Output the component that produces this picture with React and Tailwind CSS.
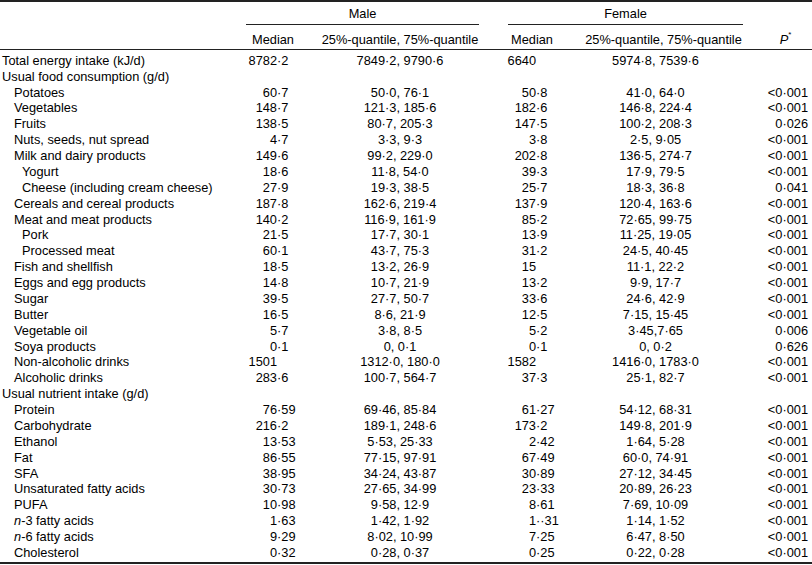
import React from "react";

const rows = [
  ["Total energy intake (kJ/d)", 0, "8782·2", "7849·2, 9790·6", "6640", "5974·8, 7539·6", ""],
  ["Usual food consumption (g/d)", 0],
  ["Potatoes", 1, "60·7", "50·0, 76·1", "50·8", "41·0, 64·0", "<0·001"],
  ["Vegetables", 1, "148·7", "121·3, 185·6", "182·6", "146·8, 224·4", "<0·001"],
  ["Fruits", 1, "138·5", "80·7, 205·3", "147·5", "100·2, 208·3", "0·026"],
  ["Nuts, seeds, nut spread", 1, "4·7", "3·3, 9·3", "3·8", "2·5, 9·05", "<0·001"],
  ["Milk and dairy products", 1, "149·6", "99·2, 229·0", "202·8", "136·5, 274·7", "<0·001"],
  ["Yogurt", 2, "18·6", "11·8, 54·0", "39·3", "17·9, 79·5", "<0·001"],
  ["Cheese (including cream cheese)", 2, "27·9", "19·3, 38·5", "25·7", "18·3, 36·8", "0·041"],
  ["Cereals and cereal products", 1, "187·8", "162·6, 219·4", "137·9", "120·4, 163·6", "<0·001"],
  ["Meat and meat products", 1, "140·2", "116·9, 161·9", "85·2", "72·65, 99·75", "<0·001"],
  ["Pork", 2, "21·5", "17·7, 30·1", "13·9", "11·25, 19·05", "<0·001"],
  ["Processed meat", 2, "60·1", "43·7, 75·3", "31·2", "24·5, 40·45", "<0·001"],
  ["Fish and shellfish", 1, "18·5", "13·2, 26·9", "15", "11·1, 22·2", "<0·001"],
  ["Eggs and egg products", 1, "14·8", "10·7, 21·9", "13·2", "9·9, 17·7", "<0·001"],
  ["Sugar", 1, "39·5", "27·7, 50·7", "33·6", "24·6, 42·9", "<0·001"],
  ["Butter", 1, "16·5", "8·6, 21·9", "12·5", "7·15, 15·45", "<0·001"],
  ["Vegetable oil", 1, "5·7", "3·8, 8·5", "5·2", "3·45,7·65", "0·006"],
  ["Soya products", 1, "0·1", "0, 0·1", "0·1", "0, 0·2", "0·626"],
  ["Non-alcoholic drinks", 1, "1501", "1312·0, 180·0", "1582", "1416·0, 1783·0", "<0·001"],
  ["Alcoholic drinks", 1, "283·6", "100·7, 564·7", "37·3", "25·1, 82·7", "<0·001"],
  ["Usual nutrient intake (g/d)", 0],
  ["Protein", 1, "76·59", "69·46, 85·84", "61·27", "54·12, 68·31", "<0·001"],
  ["Carbohydrate", 1, "216·2", "189·1, 248·6", "173·2", "149·8, 201·9", "<0·001"],
  ["Ethanol", 1, "13·53", "5·53, 25·33", "2·42", "1·64, 5·28", "<0·001"],
  ["Fat", 1, "86·55", "77·15, 97·91", "67·49", "60·0, 74·91", "<0·001"],
  ["SFA", 1, "38·95", "34·24, 43·87", "30·89", "27·12, 34·45", "<0·001"],
  ["Unsaturated fatty acids", 1, "30·73", "27·65, 34·99", "23·33", "20·89, 26·23", "<0·001"],
  ["PUFA", 1, "10·98", "9·58, 12·9", "8·61", "7·69, 10·09", "<0·001"],
  ["n-3 fatty acids", 1, "1·63", "1·42, 1·92", "1··31", "1·14, 1·52", "<0·001"],
  ["n-6 fatty acids", 1, "9·29", "8·02, 10·99", "7·25", "6·47, 8·50", "<0·001"],
  ["Cholesterol", 1, "0·32", "0·28, 0·37", "0·25", "0·22, 0·28", "<0·001"],
];

// splits a value at the first middle dot so the column lines up on the decimal
const Decimal = ({ value, intWidth }) => {
  if (!value) return null;
  const i = value.indexOf("·");
  const whole = i === -1 ? value : value.slice(0, i);
  const frac = i === -1 ? "" : value.slice(i);
  return (
    <>
      <span className={`inline-block text-right ${intWidth}`}>{whole}</span>
      <span className="inline-block text-left">{frac}</span>
    </>
  );
};

const Label = ({ text }) => {
  if (text.startsWith("n-")) {
    return (
      <>
        <i>n</i>
        {text.slice(1)}
      </>
    );
  }
  return text;
};

const indent = ["pl-[2px]", "pl-[14px]", "pl-[22px]"];

export default function App() {
  return (
    <div
      className="w-[812px] bg-white text-black text-[12.8px] leading-[15.87px]"
      style={{ fontFamily: '"Liberation Sans", Arial, sans-serif' }}
    >
      <div className="border-t-2 border-b-2 border-[#222]">
        <table className="w-full table-fixed border-collapse">
          <colgroup>
            <col className="w-[246px]" />
            <col className="w-[54px]" />
            <col className="w-[200px]" />
            <col className="w-[64px]" />
            <col className="w-[199px]" />
            <col className="w-[49px]" />
          </colgroup>
          <thead>
            <tr>
              <th className="p-0" />
              <th colSpan={2} className="p-0 font-normal">
                <div className="mr-[21px] pt-[4px] pb-[2px] border-b border-[#222] text-center">
                  Male
                </div>
              </th>
              <th colSpan={2} className="p-0 font-normal">
                <div className="ml-[8px] mr-[20px] pt-[4px] pb-[2px] border-b border-[#222] text-center">
                  Female
                </div>
              </th>
              <th className="p-0" />
            </tr>
            <tr className="border-b border-[#222]">
              <th className="p-0 pt-[7px] pb-[1px]" />
              <th className="p-0 pt-[7px] pb-[1px] font-normal text-center">Median</th>
              <th className="p-0 pt-[7px] pb-[1px] font-normal text-center whitespace-nowrap">
                25%-quantile, 75%-quantile
              </th>
              <th className="p-0 pt-[7px] pb-[1px] font-normal text-center">Median</th>
              <th className="p-0 pt-[7px] pb-[1px] font-normal text-center whitespace-nowrap">
                25%-quantile, 75%-quantile
              </th>
              <th className="p-0 pt-[7px] pb-[1px] pr-[4px] font-normal text-center">
                <i>P</i>
                <sup className="text-[8px] align-[3px]">*</sup>
              </th>
            </tr>
          </thead>
          <tbody>
            {rows.map((r, idx) => {
              const pad =
                idx === 0 ? "pt-[3px]" : idx === rows.length - 1 ? "pb-[1px]" : "";
              return (
                <tr key={idx}>
                  <td className={`p-0 whitespace-nowrap ${indent[r[1]]} ${pad}`}>
                    <Label text={r[0]} />
                  </td>
                  <td className={`p-0 whitespace-nowrap ${pad}`}>
                    <Decimal value={r[2]} intWidth="w-[31px]" />
                  </td>
                  <td className={`p-0 whitespace-nowrap text-center ${pad}`}>{r[3]}</td>
                  <td className={`p-0 whitespace-nowrap ${pad}`}>
                    <Decimal value={r[4]} intWidth="w-[36px]" />
                  </td>
                  <td className={`p-0 pr-[16px] whitespace-nowrap text-center ${pad}`}>
                    {r[5]}
                  </td>
                  <td className={`p-0 pr-[4px] whitespace-nowrap text-right ${pad}`}>
                    {r[6]}
                  </td>
                </tr>
              );
            })}
          </tbody>
        </table>
      </div>
    </div>
  );
}
